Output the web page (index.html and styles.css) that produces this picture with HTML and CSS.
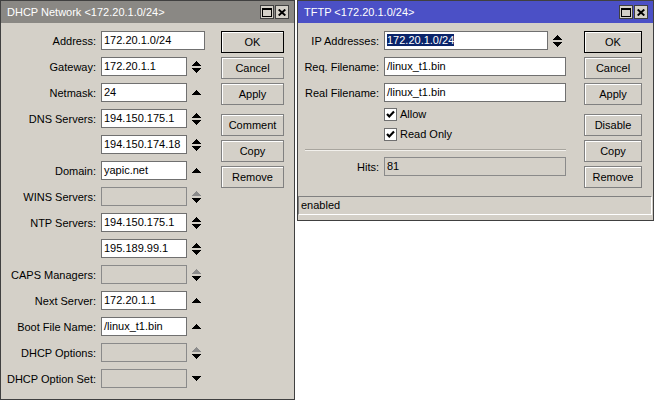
FILE: index.html
```html
<!DOCTYPE html>
<html>
<head>
<meta charset="utf-8">
<title>DHCP Network / TFTP</title>
<link rel="stylesheet" href="styles.css">
</head>
<body>
<div class="desk">

  <section class="win win-dhcp">
    <header class="title inactive">
      <span class="title-text">DHCP Network &lt;172.20.1.0/24&gt;</span>
      <span class="tbtns">
        <span class="tbtn"><svg width="10" height="9" viewBox="0 0 10 9"><path fill-rule="evenodd" d="M0 0h10v9H0z M1 2v6h8V2z"/></svg></span>
        <span class="tbtn"><svg width="8" height="7" viewBox="0 0 8 7"><path d="M0.7 0.5 L7.3 6.5 M7.3 0.5 L0.7 6.5" stroke="#000" stroke-width="1.9" fill="none"/></svg></span>
      </span>
    </header>
    <div class="wbody">
      <div class="form form-dhcp">
        <div class="row"><span class="lbl">Address:</span><div class="field"><span class="input full">172.20.1.0/24</span></div></div>
        <div class="row"><span class="lbl">Gateway:</span><div class="field"><span class="input">172.20.1.1</span><span class="ar"><svg width="9" height="12" viewBox="0 0 9 12"><path d="M4 0H5V1H6V2H7V3H8V4H9V5H0V4H1V3H2V2H3V1H4Z"/><path d="M0 7H9V8H8V9H7V10H6V11H5V12H4V11H3V10H2V9H1V8H0Z"/></svg></span></div></div>
        <div class="row"><span class="lbl">Netmask:</span><div class="field"><span class="input">24</span><span class="ar"><svg width="9" height="5" viewBox="0 0 9 5"><path d="M4 0H5V1H6V2H7V3H8V4H9V5H0V4H1V3H2V2H3V1H4Z"/></svg></span></div></div>
        <div class="row"><span class="lbl">DNS Servers:</span><div class="field"><span class="input">194.150.175.1</span><span class="ar"><svg width="9" height="12" viewBox="0 0 9 12"><path d="M4 0H5V1H6V2H7V3H8V4H9V5H0V4H1V3H2V2H3V1H4Z"/><path d="M0 7H9V8H8V9H7V10H6V11H5V12H4V11H3V10H2V9H1V8H0Z"/></svg></span></div></div>
        <div class="row"><span class="lbl"></span><div class="field"><span class="input">194.150.174.18</span><span class="ar"><svg width="9" height="12" viewBox="0 0 9 12"><path d="M4 0H5V1H6V2H7V3H8V4H9V5H0V4H1V3H2V2H3V1H4Z"/><path d="M0 7H9V8H8V9H7V10H6V11H5V12H4V11H3V10H2V9H1V8H0Z"/></svg></span></div></div>
        <div class="row"><span class="lbl">Domain:</span><div class="field"><span class="input">yapic.net</span><span class="ar"><svg width="9" height="5" viewBox="0 0 9 5"><path d="M4 0H5V1H6V2H7V3H8V4H9V5H0V4H1V3H2V2H3V1H4Z"/></svg></span></div></div>
        <div class="row"><span class="lbl">WINS Servers:</span><div class="field"><span class="input dis"></span><span class="ar"><svg width="9" height="12" viewBox="0 0 9 12"><path class="dim" d="M4 0H5V1H6V2H7V3H8V4H9V5H0V4H1V3H2V2H3V1H4Z"/><path d="M0 7H9V8H8V9H7V10H6V11H5V12H4V11H3V10H2V9H1V8H0Z"/></svg></span></div></div>
        <div class="row"><span class="lbl">NTP Servers:</span><div class="field"><span class="input">194.150.175.1</span><span class="ar"><svg width="9" height="12" viewBox="0 0 9 12"><path d="M4 0H5V1H6V2H7V3H8V4H9V5H0V4H1V3H2V2H3V1H4Z"/><path d="M0 7H9V8H8V9H7V10H6V11H5V12H4V11H3V10H2V9H1V8H0Z"/></svg></span></div></div>
        <div class="row"><span class="lbl"></span><div class="field"><span class="input">195.189.99.1</span><span class="ar"><svg width="9" height="12" viewBox="0 0 9 12"><path d="M4 0H5V1H6V2H7V3H8V4H9V5H0V4H1V3H2V2H3V1H4Z"/><path d="M0 7H9V8H8V9H7V10H6V11H5V12H4V11H3V10H2V9H1V8H0Z"/></svg></span></div></div>
        <div class="row"><span class="lbl">CAPS Managers:</span><div class="field"><span class="input dis"></span><span class="ar"><svg width="9" height="12" viewBox="0 0 9 12"><path class="dim" d="M4 0H5V1H6V2H7V3H8V4H9V5H0V4H1V3H2V2H3V1H4Z"/><path d="M0 7H9V8H8V9H7V10H6V11H5V12H4V11H3V10H2V9H1V8H0Z"/></svg></span></div></div>
        <div class="row"><span class="lbl">Next Server:</span><div class="field"><span class="input">172.20.1.1</span><span class="ar"><svg width="9" height="5" viewBox="0 0 9 5"><path d="M4 0H5V1H6V2H7V3H8V4H9V5H0V4H1V3H2V2H3V1H4Z"/></svg></span></div></div>
        <div class="row"><span class="lbl">Boot File Name:</span><div class="field"><span class="input">/linux_t1.bin</span><span class="ar"><svg width="9" height="5" viewBox="0 0 9 5"><path d="M4 0H5V1H6V2H7V3H8V4H9V5H0V4H1V3H2V2H3V1H4Z"/></svg></span></div></div>
        <div class="row"><span class="lbl">DHCP Options:</span><div class="field"><span class="input dis"></span><span class="ar"><svg width="9" height="12" viewBox="0 0 9 12"><path class="dim" d="M4 0H5V1H6V2H7V3H8V4H9V5H0V4H1V3H2V2H3V1H4Z"/><path d="M0 7H9V8H8V9H7V10H6V11H5V12H4V11H3V10H2V9H1V8H0Z"/></svg></span></div></div>
        <div class="row"><span class="lbl">DHCP Option Set:</span><div class="field"><span class="input dis"></span><span class="ar"><svg width="9" height="5" viewBox="0 0 9 5"><path d="M0 0H9V1H8V2H7V3H6V4H5V5H4V4H3V3H2V2H1V1H0Z"/></svg></span></div></div>
      </div>
      <div class="btns btns-dhcp">
        <span class="btn default">OK</span>
        <span class="btn">Cancel</span>
        <span class="btn">Apply</span>
        <span class="btn group">Comment</span>
        <span class="btn">Copy</span>
        <span class="btn">Remove</span>
      </div>
    </div>
  </section>

  <section class="win win-tftp">
    <header class="title active">
      <span class="title-text">TFTP &lt;172.20.1.0/24&gt;</span>
      <span class="tbtns">
        <span class="tbtn"><svg width="10" height="9" viewBox="0 0 10 9"><path fill-rule="evenodd" d="M0 0h10v9H0z M1 2v6h8V2z"/></svg></span>
        <span class="tbtn"><svg width="8" height="7" viewBox="0 0 8 7"><path d="M0.7 0.5 L7.3 6.5 M7.3 0.5 L0.7 6.5" stroke="#000" stroke-width="1.9" fill="none"/></svg></span>
      </span>
    </header>
    <div class="wbody">
      <div class="form form-tftp">
        <div class="row"><span class="lbl">IP Addresses:</span><div class="field"><span class="input"><span class="sel">172.20.1.0/24</span></span><span class="ar"><svg width="9" height="12" viewBox="0 0 9 12"><path d="M4 0H5V1H6V2H7V3H8V4H9V5H0V4H1V3H2V2H3V1H4Z"/><path d="M0 7H9V8H8V9H7V10H6V11H5V12H4V11H3V10H2V9H1V8H0Z"/></svg></span></div></div>
        <div class="row"><span class="lbl">Req. Filename:</span><div class="field"><span class="input full">/linux_t1.bin</span></div></div>
        <div class="row"><span class="lbl">Real Filename:</span><div class="field"><span class="input full">/linux_t1.bin</span></div></div>
        <div class="row check first"><span class="lbl"></span><div class="field"><span class="cb"><svg width="11" height="11" viewBox="0 0 11 11"><polyline points="2,5 4.3,7.4 9,2.6" fill="none" stroke="#000" stroke-width="2.2"/></svg></span><span class="cbl">Allow</span></div></div>
        <div class="row check"><span class="lbl"></span><div class="field"><span class="cb"><svg width="11" height="11" viewBox="0 0 11 11"><polyline points="2,5 4.3,7.4 9,2.6" fill="none" stroke="#000" stroke-width="2.2"/></svg></span><span class="cbl">Read Only</span></div></div>
        <div class="sep"></div>
        <div class="row"><span class="lbl">Hits:</span><div class="field"><span class="input full dis">81</span></div></div>
      </div>
      <div class="btns btns-tftp">
        <span class="btn default">OK</span>
        <span class="btn">Cancel</span>
        <span class="btn">Apply</span>
        <span class="btn group">Disable</span>
        <span class="btn">Copy</span>
        <span class="btn">Remove</span>
      </div>
    </div>
    <div class="status">enabled</div>
  </section>

</div>
</body>
</html>
```

FILE: styles.css
```css
* { box-sizing: border-box; }

html, body {
  margin: 0;
  padding: 0;
}

body {
  width: 654px;
  height: 400px;
  overflow: hidden;
  background: #ffffff;
  font-family: "Liberation Sans", Arial, sans-serif;
  font-size: 11px;
  color: #000;
}

.desk {
  display: flex;
  align-items: flex-start;
  gap: 2px;
}

.win {
  display: flex;
  flex-direction: column;
  background: #d4d0c8;
  border: 1px solid #404040;
}

.win-dhcp { width: 295px; height: 400px; }
.win-tftp { width: 357px; height: 221px; }

.title {
  height: 22px;
  flex: none;
  display: flex;
  align-items: center;
  justify-content: space-between;
  padding: 0 5px 0 6px;
  color: #fff;
  white-space: nowrap;
}

.title.inactive { background: #8a8884; }
.title.active { background: #4b50c6; }

.title-text { padding-bottom: 1px; }

.tbtns {
  display: flex;
  gap: 1px;
}

.tbtn {
  width: 14px;
  height: 14px;
  background: #d4d0c8;
  border: 1px solid #404040;
  display: flex;
  align-items: center;
  justify-content: center;
}

.tbtn svg { display: block; }

.wbody {
  display: flex;
  align-items: flex-start;
  padding-top: 8px;
}

.form { display: flex; flex-direction: column; }

.row {
  display: flex;
  align-items: center;
  height: 19px;
  margin-bottom: 7px;
}

.lbl {
  flex: none;
  text-align: right;
  white-space: nowrap;
  margin-right: 5px;
}

.form-dhcp .lbl { width: 95px; }
.form-tftp .lbl { width: 81px; }

.field {
  display: flex;
  align-items: center;
  height: 19px;
}

.form-dhcp .field { width: 104px; }
.form-tftp .field { width: 182px; }

.input {
  flex: 1;
  height: 19px;
  border: 1px solid #707070;
  background: #fff;
  padding: 0 2px;
  line-height: 17px;
  white-space: nowrap;
  overflow: hidden;
}

.input.dis { background: #d4d0c8; border-color: #8a8a8a; }

.ar {
  flex: none;
  width: 18px;
  display: flex;
  justify-content: center;
  align-items: center;
}

.ar svg { display: block; }
.ar path { fill: #000; }
.ar path.dim { fill: #8c8c8c; }

.sel {
  background: #0a246a;
  color: #fff;
}

.row.check { height: 20px; margin-bottom: 0; }
.row.check.first { margin-top: -5px; }

.cb {
  width: 13px;
  height: 13px;
  border: 1px solid #707070;
  background: #fff;
  display: flex;
  align-items: center;
  justify-content: center;
  flex: none;
}

.cb svg { display: block; }

.cbl { margin-left: 3px; }

.sep {
  width: 261px;
  margin: 5px 0 6px 7px;
  height: 2px;
  border-top: 1px solid #a8a59e;
  border-bottom: 1px solid #f2f0ec;
}

.btns {
  display: flex;
  flex-direction: column;
}

.btns-dhcp { margin-left: 16px; }
.btns-tftp { margin-left: 18px; }

.btn {
  height: 22px;
  margin-bottom: 4px;
  display: flex;
  align-items: center;
  justify-content: center;
  background: #d4d0c8;
  border: 1px solid #808080;
  box-shadow: inset 1px 1px 0 #fff;
}

.btns-dhcp .btn { width: 63px; }
.btns-tftp .btn { width: 58px; }

.btn.default { border-color: #000; }
.btn.group { margin-top: 5px; }

.status {
  margin: auto 1px 5px 0;
  height: 19px;
  border: 1px solid;
  border-color: #808080 #fff #fff #808080;
  padding-left: 2px;
  line-height: 17px;
}
```
